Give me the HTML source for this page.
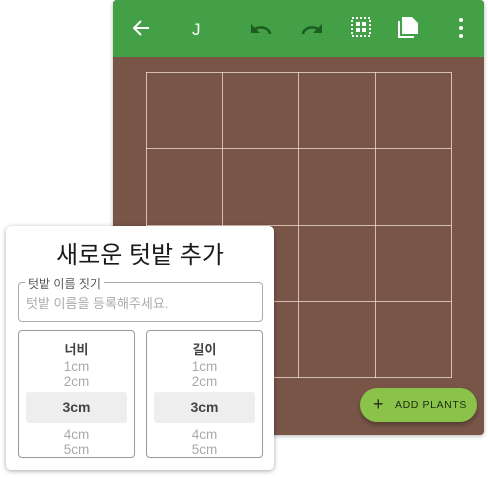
<!DOCTYPE html>
<html><head><meta charset="utf-8"><style>
body{margin:0;width:488px;height:478px;background:#fff;position:relative;overflow:hidden;font-family:"Liberation Sans","Noto Sans CJK KR",sans-serif}
.phone{position:absolute;left:113px;top:0;width:371px;height:435px;background:#795548;border-radius:4px;overflow:hidden;box-shadow:0 1px 4px rgba(0,0,0,.3)}
.bar{position:absolute;left:0;top:0;width:100%;height:57px;background:#43a047}
.v,.h{position:absolute;background:rgba(255,235,225,.7)}
.v{width:1px;top:72px;height:306px}
.h{height:1px;left:33px;width:305px}
.btn{position:absolute;left:247px;top:388px;width:117px;height:34px;border-radius:17px;background:#8bc34a;box-shadow:0 3px 5px rgba(0,0,0,.3);font-size:10.5px;letter-spacing:.6px;color:#1e2a14;line-height:34px}
.card{position:absolute;left:6px;top:226px;width:268px;height:244px;background:#fff;border-radius:5px;box-shadow:0 1px 5px rgba(0,0,0,.35)}
.title{position:absolute;top:9px;width:100%;text-align:center;font-size:24px;color:#1a1a1a}
.inp{position:absolute;left:12px;top:56px;width:243px;height:38px;border:1px solid #aaa;border-radius:4px}
.lab{position:absolute;left:6px;top:-8px;background:#fff;padding:0 3px;font-size:12px;color:#555}
.ph{position:absolute;left:7px;top:10px;font-size:13px;color:#aaa}
.pk{position:absolute;top:104px;width:115px;height:126px;border:1px solid #999;border-radius:4px;text-align:center}
.pk .t{margin-top:8px;font-size:13px;font-weight:bold;color:#444;height:20px}
.pk .n{font-size:13.5px;color:#aaa;line-height:15px}
.pk .s{margin:3px 7px 4px;height:31px;background:#eee;border-radius:3px;font-weight:bold;color:#444;font-size:14px;line-height:31px}
</style></head><body>
<div class="phone">
<div class="bar">
<svg width="371" height="57" viewBox="0 0 371 57">
<path d="M36 28H22M28 21l-7 7 7 7" stroke="#fff" stroke-width="2" fill="none"/>
<text x="79" y="35" fill="#fff" font-size="17" font-family="Liberation Sans">J</text>
<path d="M157 34a9 7 0 0 0-16-4" stroke="#1b5e20" stroke-width="2.6" fill="none"/><path d="M138 24v9h9z" fill="#1b5e20"/>
<path d="M190 34a9 7 0 0 1 16-4" stroke="#1b5e20" stroke-width="2.6" fill="none"/><path d="M209 24v9h-9z" fill="#1b5e20"/>
<g fill="#fff"><rect x="239" y="18" width="18" height="18" fill="none" stroke="#fff" stroke-width="2" stroke-dasharray="2 2"/><rect x="243" y="22" width="4" height="4"/><rect x="249" y="22" width="4" height="4"/><rect x="243" y="28" width="4" height="4"/><rect x="249" y="28" width="4" height="4"/></g>
<path d="M289 17h10l6 6v11h-16z" fill="#fff"/><path d="M286 21v16h15" stroke="#fff" stroke-width="2" fill="none"/>
<g fill="#fff"><circle cx="348" cy="20" r="2"/><circle cx="348" cy="28" r="2"/><circle cx="348" cy="36" r="2"/></g>
</svg>
</div>
<div class="v" style="left:33px"></div><div class="v" style="left:109px"></div><div class="v" style="left:185px"></div><div class="v" style="left:262px"></div><div class="v" style="left:338px"></div>
<div class="h" style="top:72px"></div><div class="h" style="top:148px"></div><div class="h" style="top:225px"></div><div class="h" style="top:301px"></div><div class="h" style="top:377px"></div>
<div class="btn"><span style="position:absolute;left:13px;font-size:18px;top:-1px">+</span><span style="position:absolute;left:35px">ADD PLANTS</span></div>
</div>
<div class="card">
<div class="title">새로운 텃밭 추가</div>
<div class="inp"><span class="lab">텃밭 이름 짓기</span><span class="ph">텃밭 이름을 등록해주세요.</span></div>
<div class="pk" style="left:12px"><div class="t">너비</div><div class="n">1cm<br>2cm</div><div class="s">3cm</div><div class="n">4cm<br>5cm</div></div>
<div class="pk" style="left:140px"><div class="t">길이</div><div class="n">1cm<br>2cm</div><div class="s">3cm</div><div class="n">4cm<br>5cm</div></div>
</div>
</body></html>
